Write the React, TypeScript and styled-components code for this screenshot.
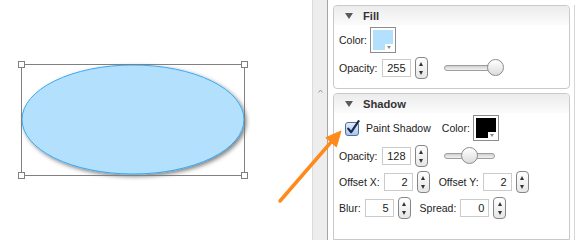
import React from "react";
import styled, { createGlobalStyle } from "styled-components";

const GlobalStyle = createGlobalStyle`
  html, body {
    margin: 0;
    padding: 0;
    background: #fff;
  }
  body {
    font-family: "Liberation Sans", Arial, sans-serif;
    font-size: 10.5px;
    color: #222;
  }
`;

const Page = styled.div`
  position: relative;
  display: flex;
  width: 577px;
  height: 240px;
  overflow: hidden;
  background: #fff;
`;

const Canvas = styled.div`
  width: 312px;
  flex-shrink: 0;
  border-right: 1px solid #dadada;
  padding: 58px 0 0 15px;
  box-sizing: border-box;
  width: 313px;
`;

const Splitter = styled.div`
  width: 15px;
  flex-shrink: 0;
  box-sizing: border-box;
  background: #ededed;
  border-right: 1px solid #a6a6a6;
  display: flex;
  justify-content: center;
  padding-top: 89px;
`;

const Inspector = styled.div`
  flex: 1;
  display: flex;
  padding: 5px 2px 0 5px;
`;

const ScrollArea = styled.div`
  flex: 1;
  display: flex;
  flex-direction: column;
  gap: 4px;
  padding-right: 4px;
  border-right: 1px solid #d6d6d6;
`;

const Section = styled.div<{ $grow?: boolean }>`
  display: flex;
  flex-direction: column;
  border: 1px solid #c9c9c9;
  border-radius: 4px;
  background: #fff;
  flex: ${(p) => (p.$grow ? 1 : "none")};
  ${(p) => (p.$grow ? "border-bottom-left-radius: 0; border-bottom-right-radius: 0;" : "")}
`;

const Header = styled.div`
  height: 19px;
  display: flex;
  align-items: center;
  gap: 10px;
  padding-left: 11px;
  border-radius: 4px 4px 0 0;
  background: linear-gradient(#ececec, #fbfbfb);
  font-size: 11.2px;
  font-weight: bold;
  color: #333;
`;

const Caret = styled.span`
  width: 0;
  height: 0;
  border-left: 4px solid transparent;
  border-right: 4px solid transparent;
  border-top: 6px solid #5a5a5a;
`;

const Body = styled.div<{ $bottom: number }>`
  display: flex;
  flex-direction: column;
  gap: 4px;
  padding: 2px 5px ${(p) => p.$bottom}px 5px;
`;

const Row = styled.div<{ $tall?: boolean; $indent?: number }>`
  display: flex;
  align-items: center;
  height: ${(p) => (p.$tall ? 26 : 22)}px;
  padding-left: ${(p) => p.$indent ?? 0}px;
`;

const Label = styled.span<{ $gap?: number; $lead?: number }>`
  margin-right: ${(p) => p.$gap ?? 4}px;
  margin-left: ${(p) => p.$lead ?? 0}px;
  white-space: nowrap;
`;

const NumberBox = styled.div`
  width: 29px;
  height: 18px;
  box-sizing: border-box;
  border: 1px solid #cbcbcb;
  background: #fff;
  text-align: right;
  padding-right: 4px;
  line-height: 16px;
  font-size: 11px;
`;

const SpinnerBox = styled.div`
  width: 13px;
  height: 22px;
  box-sizing: border-box;
  margin-left: 4px;
  border: 1px solid #858585;
  border-radius: 4px;
  background: linear-gradient(#ffffff, #e6e6e6);
  display: flex;
  flex-direction: column;
  align-items: center;
  justify-content: space-between;
  padding: 4px 0 3px;
`;

const ArrowUp = styled.span`
  width: 0;
  height: 0;
  border-left: 2.5px solid transparent;
  border-right: 2.5px solid transparent;
  border-bottom: 4px solid #333;
`;

const ArrowDown = styled.span`
  width: 0;
  height: 0;
  border-left: 2.5px solid transparent;
  border-right: 2.5px solid transparent;
  border-top: 4px solid #333;
`;

const Track = styled.div`
  position: relative;
  width: 51px;
  height: 6px;
  margin-left: 16px;
  box-sizing: border-box;
  border: 1px solid #9d9d9d;
  border-radius: 3px;
  background: linear-gradient(#d0d0d0, #f2f2f2);
`;

const Thumb = styled.div`
  position: absolute;
  top: -7px;
  width: 17px;
  height: 17px;
  box-sizing: border-box;
  border: 1px solid #8b8b8b;
  border-radius: 50%;
  background: linear-gradient(#ffffff, #dcdcdc);
`;

const SwatchFrame = styled.div`
  position: relative;
  width: 26px;
  height: 26px;
  box-sizing: border-box;
  border: 1px solid #8c8c8c;
  background: #fff;
  padding: 2px;
  display: flex;
`;

const SwatchColor = styled.div<{ $color: string }>`
  flex: 1;
  background: ${(p) => p.$color};
`;

const SwatchNotch = styled.div`
  position: absolute;
  right: 2px;
  bottom: 2px;
  width: 8px;
  height: 6px;
  background: #fff;
  display: flex;
  align-items: center;
  justify-content: center;
`;

const NotchTriangle = styled.span`
  width: 0;
  height: 0;
  border-left: 2.5px solid transparent;
  border-right: 2.5px solid transparent;
  border-top: 3px solid #8a8a8a;
`;

const CheckWrap = styled.span`
  display: flex;
  margin-right: 6px;
`;

const Overlay = styled.svg`
  position: absolute;
  left: 0;
  top: 0;
  pointer-events: none;
`;

function Spinner() {
  return (
    <SpinnerBox>
      <ArrowUp />
      <ArrowDown />
    </SpinnerBox>
  );
}

function NumberField({ value }: { value: number }) {
  return (
    <>
      <NumberBox>{value}</NumberBox>
      <Spinner />
    </>
  );
}

function Slider({ value }: { value: number }) {
  return (
    <Track>
      <Thumb style={{ left: (value / 255) * 51 - 9 }} />
    </Track>
  );
}

function Swatch({ color }: { color: string }) {
  return (
    <SwatchFrame>
      <SwatchColor $color={color} />
      <SwatchNotch>
        <NotchTriangle />
      </SwatchNotch>
    </SwatchFrame>
  );
}

function Checkbox() {
  return (
    <CheckWrap>
      <svg width="15" height="16" viewBox="0 0 15 16">
        <defs>
          <linearGradient id="cb" x1="0" y1="0" x2="0" y2="1">
            <stop offset="0" stopColor="#e4eefa" />
            <stop offset="1" stopColor="#a9c6ea" />
          </linearGradient>
        </defs>
        <rect x="0.5" y="2.5" width="13" height="13" rx="2.5" fill="url(#cb)" stroke="#4f6f9f" />
        <path d="M3.2 8.6 L6.2 12.2 L13.6 1.2" fill="none" stroke="#1c2b4d" strokeWidth="2.2" strokeLinecap="round" strokeLinejoin="round" />
      </svg>
    </CheckWrap>
  );
}

function Drawing() {
  return (
    <svg width="250" height="130" viewBox="0 0 250 130">
      <defs>
        <filter id="ds" x="-10%" y="-20%" width="130%" height="150%">
          <feDropShadow dx="2" dy="2" stdDeviation="2.2" floodColor="#000" floodOpacity="0.5" />
        </filter>
      </defs>
      <ellipse cx="118" cy="61.5" rx="111" ry="54.5" fill="#b2e0fd" stroke="#3aa8f0" strokeWidth="1" filter="url(#ds)" />
      <rect x="6.5" y="6.5" width="223" height="111" fill="none" stroke="#808080" />
      {[
        [6.5, 6.5],
        [229.5, 6.5],
        [6.5, 117.5],
        [229.5, 117.5]
      ].map(([x, y]) => (
        <rect key={`${x}-${y}`} x={x - 3} y={y - 3} width="6" height="6" fill="#fff" stroke="#808080" />
      ))}
    </svg>
  );
}

export default function App() {
  return (
    <>
      <GlobalStyle />
      <Page>
        <Canvas>
          <Drawing />
        </Canvas>
        <Splitter>
          <svg width="5" height="4" viewBox="0 0 5 4">
            <path d="M0.5 3.5 L2.5 1 L4.5 3.5" fill="none" stroke="#9a9a9a" strokeWidth="1" />
          </svg>
        </Splitter>
        <Inspector>
          <ScrollArea>
            <Section>
              <Header>
                <Caret />
                Fill
              </Header>
              <Body $bottom={9}>
                <Row $tall>
                  <Label $gap={3}>Color:</Label>
                  <Swatch color="#b2e0fd" />
                </Row>
                <Row>
                  <Label>Opacity:</Label>
                  <NumberField value={255} />
                  <Slider value={255} />
                </Row>
              </Body>
            </Section>
            <Section $grow>
              <Header>
                <Caret />
                Shadow
              </Header>
              <Body $bottom={0}>
                <Row $tall $indent={6}>
                  <Checkbox />
                  <Label $gap={11}>Paint Shadow</Label>
                  <Label $gap={3}>Color:</Label>
                  <Swatch color="#000" />
                </Row>
                <Row>
                  <Label>Opacity:</Label>
                  <NumberField value={128} />
                  <Slider value={128} />
                </Row>
                <Row>
                  <Label>Offset X:</Label>
                  <NumberField value={2} />
                  <Label $lead={9}>Offset Y:</Label>
                  <NumberField value={2} />
                </Row>
                <Row>
                  <Label>Blur:</Label>
                  <NumberField value={5} />
                  <Label $lead={9}>Spread:</Label>
                  <NumberField value={0} />
                </Row>
              </Body>
            </Section>
          </ScrollArea>
        </Inspector>
        <Overlay width="577" height="240" viewBox="0 0 577 240">
          <line x1="280" y1="201" x2="332" y2="141" stroke="#ff8a1c" strokeWidth="3.5" strokeLinecap="round" />
          <polygon points="341,131 336.4,146.9 325.8,137.7" fill="#ff8a1c" stroke="#ff8a1c" strokeWidth="1" strokeLinejoin="round" />
        </Overlay>
      </Page>
    </>
  );
}
